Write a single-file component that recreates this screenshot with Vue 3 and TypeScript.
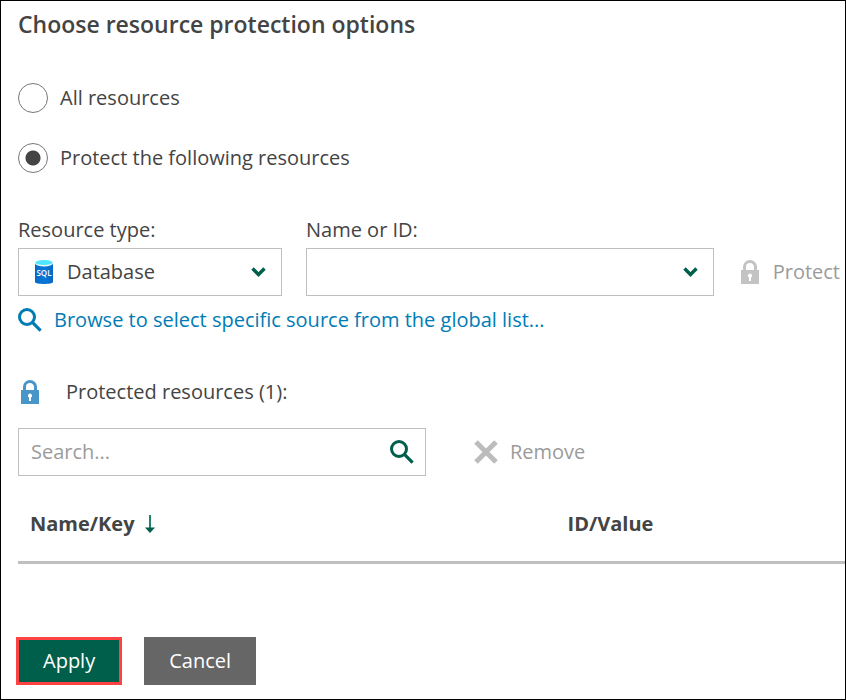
<script setup lang="ts">
import { ref } from 'vue'

type Scope = 'all' | 'selected'

const scope = ref<Scope>('selected')
const resourceType = ref('Database')
const resourceName = ref('')
const search = ref('')
const protectedCount = ref(1)
</script>

<template>
  <form class="panel" @submit.prevent>
    <main class="content">
      <h1>Choose resource protection options</h1>

      <label class="option">
        <input v-model="scope" type="radio" name="scope" value="all" />
        <span>All resources</span>
      </label>
      <label class="option">
        <input v-model="scope" type="radio" name="scope" value="selected" />
        <span>Protect the following resources</span>
      </label>

      <div class="fields">
        <div class="field type-field">
          <label for="resource-type">Resource type:</label>
          <div class="control">
            <svg class="sql" width="18" height="24" viewBox="0 0 18 24" aria-hidden="true">
              <defs>
                <linearGradient id="sql-body" x1="0" x2="1" y1="0" y2="0">
                  <stop offset="0" stop-color="#0669c4" />
                  <stop offset="0.5" stop-color="#0878d8" />
                  <stop offset="1" stop-color="#0669c4" />
                </linearGradient>
              </defs>
              <path d="M0 3v19c0 2.6 18 2.6 18 0V3z" fill="url(#sql-body)" />
              <ellipse cx="9" cy="3.2" rx="9" ry="3.2" fill="#e8f8fc" />
              <ellipse cx="9" cy="2.6" rx="8.6" ry="2.5" fill="#50e6ff" />
              <text x="9" y="15.5" text-anchor="middle" class="sql-text">SQL</text>
            </svg>
            <select id="resource-type" v-model="resourceType">
              <option>Database</option>
            </select>
            <svg class="chevron" width="16" height="12" viewBox="0 0 16 12" aria-hidden="true">
              <path d="M1.5 2.5L7.5 8.5L13.5 2.5" fill="none" stroke="#005f4b" stroke-width="3.4" />
            </svg>
          </div>
        </div>
        <div class="field name-field">
          <label for="resource-name">Name or ID:</label>
          <div class="control">
            <select id="resource-name" v-model="resourceName">
              <option value=""></option>
            </select>
            <svg class="chevron" width="16" height="12" viewBox="0 0 16 12" aria-hidden="true">
              <path d="M1.5 2.5L7.5 8.5L13.5 2.5" fill="none" stroke="#005f4b" stroke-width="3.4" />
            </svg>
          </div>
        </div>
        <button type="button" class="action protect" disabled>
          <svg width="18" height="24" viewBox="0 0 18 24" aria-hidden="true">
            <path d="M3.5 11V6.8a5.5 5.2 0 0 1 11 0V11" fill="none" stroke="#c3c3c3" stroke-width="3" />
            <path d="M0 10h18v14H0z" fill="#c3c3c3" />
            <path d="M9 13.5a2.2 2.2 0 0 0-1 4.1V21h2v-3.4a2.2 2.2 0 0 0-1-4.1z" fill="#fff" />
          </svg>
          <span>Protect</span>
        </button>
      </div>

      <a class="browse" href="#">
        <svg width="24" height="24" viewBox="0 0 24 24" aria-hidden="true">
          <circle cx="9" cy="9" r="7.5" fill="none" stroke="#007cb5" stroke-width="3" />
          <path d="M14.2 14.2l8.4 8.4" stroke="#007cb5" stroke-width="3.2" />
        </svg>
        <span>Browse to select specific source from the global list...</span>
      </a>

      <div class="summary">
        <svg width="18" height="24" viewBox="0 0 18 24" aria-hidden="true">
          <path d="M3.5 11V6.8a5.5 5.2 0 0 1 11 0V11" fill="none" stroke="#4896c8" stroke-width="3" />
          <path d="M0 10h18v14H0z" fill="#4896c8" />
          <path d="M9 13.5a2.2 2.2 0 0 0-1 4.1V21h2v-3.4a2.2 2.2 0 0 0-1-4.1z" fill="#fff" />
        </svg>
        <span>Protected resources ({{ protectedCount }}):</span>
      </div>

      <div class="toolbar">
        <div class="search">
          <input v-model="search" type="text" placeholder="Search..." aria-label="Search" />
          <button type="button" aria-label="Search">
            <svg width="24" height="24" viewBox="0 0 24 24" aria-hidden="true">
              <circle cx="9" cy="9" r="7.5" fill="none" stroke="#005f4b" stroke-width="3" />
              <path d="M14.2 14.2l8.4 8.4" stroke="#005f4b" stroke-width="3.2" />
            </svg>
          </button>
        </div>
        <button type="button" class="action" disabled>
          <svg width="24" height="24" viewBox="0 0 24 24" aria-hidden="true">
            <path d="M2 2l20 20M22 2L2 22" stroke="#bcbcbc" stroke-width="5" />
          </svg>
          <span>Remove</span>
        </button>
      </div>

      <table>
        <thead>
          <tr>
            <th class="name-column" scope="col" aria-sort="descending">
              <span class="sortable">
                Name/Key
                <svg width="10" height="18" viewBox="0 0 10 18" aria-hidden="true">
                  <path d="M5 0v14" stroke="#26806c" stroke-width="2" />
                  <path d="M0 12.5h10L5 18z" fill="#005f4b" />
                </svg>
              </span>
            </th>
            <th scope="col">ID/Value</th>
          </tr>
        </thead>
      </table>
    </main>

    <footer>
      <button type="submit" class="apply">Apply</button>
      <button type="button" class="cancel">Cancel</button>
    </footer>
  </form>
</template>

<style>
body {
  margin: 0;
  background: #fff;
}
</style>

<style scoped>
* {
  box-sizing: border-box;
}

.panel {
  min-height: 100vh;
  border: 1px solid #000;
  color: #444;
  font: 20px/24px "Open Sans", "Noto Sans", sans-serif;
}

button,
input,
select {
  margin: 0;
  color: inherit;
  font: inherit;
}

svg {
  display: block;
  flex: none;
}

.content {
  padding-left: 17px;
}

h1 {
  margin: 0 0 21px;
  font-size: 23px;
  font-weight: 600;
  line-height: 46px;
}

.option {
  display: flex;
  align-items: center;
  gap: 12px;
  height: 60px;
}

.option input {
  width: 30px;
  height: 30px;
  border: 1px solid #777;
  border-radius: 50%;
  appearance: none;
}

.option input:checked {
  background: radial-gradient(circle, #444 7px, transparent 8px);
}

.fields {
  display: flex;
  align-items: flex-end;
  margin-top: 24px;
  padding-right: 5px;
}

.field label {
  display: block;
  line-height: 36px;
}

.type-field {
  flex: 0 1 264px;
  margin-right: 24px;
}

.name-field {
  flex: 1;
}

.control {
  position: relative;
}

.control select {
  display: block;
  width: 100%;
  height: 48px;
  padding: 0 48px 0 12px;
  border: 1px solid #bfbfbf;
  border-radius: 0;
  background: #fff;
  appearance: none;
}

.type-field select {
  padding-left: 48px;
}

.sql {
  position: absolute;
  top: 12px;
  left: 17px;
}

.sql-text {
  fill: #fff;
  font-size: 8px;
  font-weight: 600;
}

.chevron {
  position: absolute;
  top: 18px;
  right: 15px;
  pointer-events: none;
}

.action {
  display: flex;
  align-items: center;
  gap: 12px;
  height: 48px;
  padding: 0;
  border: 0;
  background: none;
  color: #9b9b9b;
}

.protect {
  gap: 14px;
  margin-left: 27px;
}

.browse {
  display: flex;
  align-items: center;
  gap: 12px;
  height: 48px;
  color: #007cb5;
  text-decoration: none;
}

.summary {
  display: flex;
  align-items: center;
  gap: 27px;
  height: 48px;
  margin: 24px 0 12px;
  padding-left: 3px;
}

.toolbar {
  display: flex;
  gap: 48px;
}

.search {
  display: flex;
  flex: 0 1 408px;
  height: 48px;
  border: 1px solid #bfbfbf;
}

.search input {
  flex: 1;
  min-width: 0;
  padding: 0 12px;
  border: 0;
  background: none;
}

.search input::placeholder {
  color: #9b9b9b;
  opacity: 1;
}

.search button {
  padding: 0 11px;
  border: 0;
  background: none;
}

table {
  width: 100%;
  margin-top: 12px;
  border-collapse: collapse;
  table-layout: fixed;
}

th {
  height: 74px;
  padding: 0 12px;
  font-weight: 700;
  text-align: left;
}

thead {
  border-bottom: 3px solid #bfbfbf;
}

.name-column {
  width: 65%;
}

.sortable {
  display: flex;
  align-items: center;
  gap: 10px;
}

footer {
  display: flex;
  gap: 22px;
  margin-top: 73px;
  padding: 0 15px 14px;
}

footer button {
  height: 48px;
  padding: 0 25px;
  border: 0;
  background: #666;
  color: #fff;
}

footer .apply {
  padding: 0 24px;
  border: 3px solid #ff4343;
  background: #005f4b;
}
</style>
